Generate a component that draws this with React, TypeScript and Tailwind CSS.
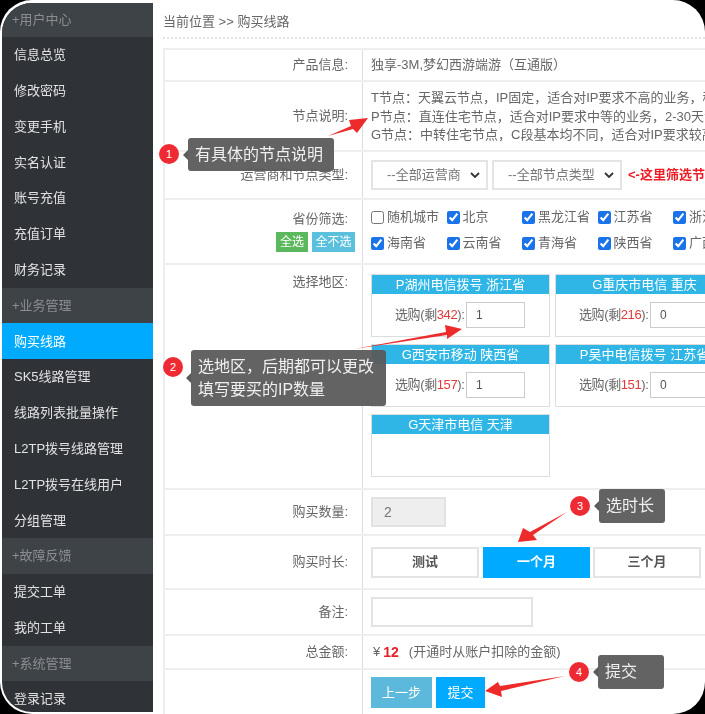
import type { ReactNode } from 'react'

const FONT = '[font-family:"Liberation_Sans","Noto_Sans_CJK_SC",sans-serif]'

const menu = [
  { label: '+用户中心', kind: 'group' },
  { label: '信息总览' },
  { label: '修改密码' },
  { label: '变更手机' },
  { label: '实名认证' },
  { label: '账号充值' },
  { label: '充值订单' },
  { label: '财务记录' },
  { label: '+业务管理', kind: 'group' },
  { label: '购买线路', kind: 'active' },
  { label: 'SK5线路管理' },
  { label: '线路列表批量操作' },
  { label: 'L2TP拨号线路管理' },
  { label: 'L2TP拨号在线用户' },
  { label: '分组管理' },
  { label: '+故障反馈', kind: 'group' },
  { label: '提交工单' },
  { label: '我的工单' },
  { label: '+系统管理', kind: 'group' },
  { label: '登录记录' },
]

const provinces = [
  { name: '随机城市', checked: false },
  { name: '北京', checked: true },
  { name: '黑龙江省', checked: true },
  { name: '江苏省', checked: true },
  { name: '浙江省', checked: true },
  { name: '海南省', checked: true },
  { name: '云南省', checked: true },
  { name: '青海省', checked: true },
  { name: '陕西省', checked: true },
  { name: '广西省', checked: true },
]

const regions = [
  { title: 'P湖州电信拨号 浙江省', left: 342, value: 1 },
  { title: 'G重庆市电信 重庆', left: 216, value: 0 },
  { title: 'G西安市移动 陕西省', left: 157, value: 1 },
  { title: 'P吴中电信拨号 江苏省', left: 151, value: 0 },
  { title: 'G天津市电信 天津' },
]

function Sidebar() {
  return (
    <aside className="w-[151px] h-full shrink-0 bg-[#2f3338] overflow-hidden rounded-l-[30px]">
      {menu.map((item, index) => {
        if (item.kind === 'group') {
          return (
            <div
              key={item.label}
              className={`${index === 0 ? 'h-[34px]' : 'h-[35.8px]'} flex items-center pl-[10px] bg-[#3e4347] text-[13px] text-[#8b8e91]`}
            >
              {item.label}
            </div>
          )
        }
        if (item.kind === 'active') {
          return (
            <div key={item.label} className="h-[35.8px] flex items-center pl-[12px] bg-[#00aaff] text-[13px] text-white">
              {item.label}
            </div>
          )
        }
        return (
          <div key={item.label} className="h-[35.8px] flex items-center pl-[12px] text-[13px] text-[#e2e2e2]">
            {item.label}
          </div>
        )
      })}
    </aside>
  )
}

function Row({ label, className, children }: { label?: ReactNode; className: string; children: ReactNode }) {
  return (
    <div className={`flex border-b-2 border-[#eeeeee] ${className}`}>
      <div className="w-[198px] shrink-0 pr-[14px] flex flex-col justify-center items-end border-r border-[#dddddd] text-[13px] text-[#666666]">
        {label}
      </div>
      <div className="flex-1 min-w-0 pl-[8px] text-[13px] text-[#666666]">{children}</div>
    </div>
  )
}

function RegionCard({ title, left, value }: { title: string; left?: number; value?: number }) {
  return (
    <div className="h-[63px] border border-[#dddddd]">
      <div className="h-[19px] bg-[#2fb6e6] text-center text-[13px] leading-[19px] text-white whitespace-nowrap">{title}</div>
      {left !== undefined && (
        <div className="flex items-center h-[41px] pl-[23px] whitespace-nowrap">
          <span className="w-[71px] text-[#666666] text-[13px] tracking-[-0.4px]">
            选购(剩<span className="text-[#e23a3a]">{left}</span>):
          </span>
          <input
            readOnly
            value={value}
            className="w-[59px] h-[26px] border border-[#cccccc] pl-[9px] text-[12px] text-[#555555] outline-none"
          />
        </div>
      )}
    </div>
  )
}

function Select({ text, className }: { text: string; className: string }) {
  return (
    <div className={`h-[30px] flex items-center justify-between border-2 border-[#e4e4e4] pl-[14px] pr-[6px] text-[13px] text-[#777777] ${className}`}>
      <span>{text}</span>
      <svg width="10" height="6" viewBox="0 0 10 6" fill="none" stroke="#333333" strokeWidth="1.8">
        <path d="M1 1l4 4 4-4" />
      </svg>
    </div>
  )
}

function Callout({ number, className, dotClassName, children }: { number: number; className: string; dotClassName: string; children: ReactNode }) {
  return (
    <>
      <div className={`absolute w-[20px] h-[20px] rounded-full bg-[#ee2b33] flex items-center justify-center text-[11px] text-white ${dotClassName}`}>
        {number}
      </div>
      <div className={`absolute rounded-[3px] bg-[#5b5b5b]/95 pl-[7px] text-[16px] leading-[23px] text-[#f0f0f0] whitespace-nowrap ${className}`}>
        <span className="absolute left-[-5px] top-1/2 -translate-y-1/2 border-y-[5px] border-y-transparent border-r-[5px] border-r-[#5b5b5b]" />
        {children}
      </div>
    </>
  )
}

export default function App() {
  return (
    <div className={`relative w-[705px] h-[714px] bg-black overflow-hidden ${FONT}`}>
      <div className="h-full blur-[0.4px]">
        <div className="flex h-full bg-white rounded-[32px] overflow-hidden pt-[3px] pl-[2px] pb-[2px]">
          <Sidebar />
          <main className="flex-1 min-w-0 pl-[10px]">
            <div className="h-[36px] pt-[3px] flex items-center border-b-2 border-dotted border-[#e2e2e2] text-[13px] text-[#666666] whitespace-nowrap">
              当前位置 &gt;&gt; 购买线路
            </div>
            <div className="mt-[9px] w-[640px] border-t-2 border-l-2 border-[#eeeeee]">
              <Row label="产品信息:" className="h-[32px]">
                <div className="h-full flex items-center">独享-3M,梦幻西游端游（互通版）</div>
              </Row>
              <Row label="节点说明:" className="h-[70px]">
                <div className="pt-[7px] leading-[18.5px] whitespace-nowrap">
                  <p>T节点：天翼云节点，IP固定，适合对IP要求不高的业务，稳定性高</p>
                  <p>P节点：直连住宅节点，适合对IP要求中等的业务，2-30天会更换</p>
                  <p>G节点：中转住宅节点，C段基本均不同，适合对IP要求较高业务</p>
                </div>
              </Row>
              <Row label="运营商和节点类型:" className="h-[48px]">
                <div className="h-full flex items-center gap-[4px] whitespace-nowrap">
                  <Select text="--全部运营商" className="w-[117px]" />
                  <Select text="--全部节点类型" className="w-[130px]" />
                  <span className="ml-[2px] font-bold text-[#ee1c25]">&lt;-这里筛选节点类型</span>
                </div>
              </Row>
              <Row
                label={
                  <>
                    <span className="mt-[-2px]">省份筛选:</span>
                    <div className="flex gap-[4px] mt-[3px] mr-[-7px] text-[12px] text-white">
                      <span className="w-[32px] h-[20px] flex items-center justify-center bg-[#5cb85c]">全选</span>
                      <span className="w-[43px] h-[20px] flex items-center justify-center bg-[#5bc0de]">全不选</span>
                    </div>
                  </>
                }
                className="h-[65px]"
              >
                <div className="grid grid-cols-[75.5px_75.5px_75.5px_75.5px_75.5px] gap-y-[10px] pt-[9px]">
                  {provinces.map((province) => (
                    <label key={province.name} className="flex items-center gap-[3px] h-[16px] whitespace-nowrap">
                      <input type="checkbox" readOnly checked={province.checked} className="w-[13px] h-[13px] m-0 accent-[#1a73e8]" />
                      {province.name}
                    </label>
                  ))}
                </div>
              </Row>
              <Row
                label={<span className="mt-[-190px]">选择地区:</span>}
                className="h-[225px]"
              >
                <div className="grid grid-cols-[179px_179px] gap-x-[5px] gap-y-[7px] pt-[9px]">
                  {regions.map((region) => (
                    <RegionCard key={region.title} {...region} />
                  ))}
                </div>
              </Row>
              <Row label="购买数量:" className="h-[46px]">
                <div className="h-full flex items-center">
                  <div className="w-[75px] h-[30px] flex items-center pl-[11px] bg-[#eeeeee] border-2 border-[#e2e2e2] text-[14px] text-[#777777]">2</div>
                </div>
              </Row>
              <Row label="购买时长:" className="h-[54px]">
                <div className="h-full flex items-center font-bold text-[13px] text-[#555555]">
                  <div className="w-[108px] h-[31px] flex items-center justify-center border-2 border-[#e4e4e4]">测试</div>
                  <div className="ml-[4px] w-[107px] h-[31px] flex items-center justify-center bg-[#00aaff] text-white">一个月</div>
                  <div className="ml-[3px] w-[108px] h-[31px] flex items-center justify-center border-2 border-[#e4e4e4]">三个月</div>
                </div>
              </Row>
              <Row label="备注:" className="h-[46px]">
                <div className="h-full flex items-center">
                  <div className="w-[162px] h-[30px] border-2 border-[#e4e4e4]" />
                </div>
              </Row>
              <Row label="总金额:" className="h-[34px]">
                <div className="h-full flex items-center whitespace-nowrap">
                  <span className="ml-[2px]">¥</span>
                  <span className="ml-[3px] font-bold text-[14px] text-[#e5202a]">12</span>
                  <span className="ml-[10px]">(开通时从账户扣除的金额)</span>
                </div>
              </Row>
              <div className="flex h-[44px]">
                <div className="w-[198px] shrink-0 border-r border-[#dddddd]" />
                <div className="pl-[8px] pt-[7px] flex gap-[4px] text-[13px] text-white">
                  <div className="w-[61px] h-[31px] flex items-center justify-center bg-[#5db9dc]">上一步</div>
                  <div className="w-[49px] h-[31px] flex items-center justify-center bg-[#00aaff]">提交</div>
                </div>
              </div>
            </div>
          </main>
        </div>

        <svg className="absolute inset-0 pointer-events-none" width="705" height="714" viewBox="0 0 705 714">
          <g fill="#ee2b2b">
            <polygon points="328,136 351,126 349,120 368,118 357,133 353,129" />
            <polygon points="354,349 446,332 445,325 462,329 447,339 447,335" />
            <polygon points="567,512 530,532 523,528 518,542 537,540 533,535" />
            <polygon points="565,676 500,686 498,682 485,691 502,697 501,691" />
          </g>
        </svg>

        <Callout number={1} dotClassName="left-[159px] top-[144px]" className="left-[188px] top-[138px] w-[146px] h-[33px] leading-[33px]">
          有具体的节点说明
        </Callout>
        <Callout number={2} dotClassName="left-[163px] top-[357px]" className="left-[191px] top-[350px] w-[195px] h-[56px] pt-[5px]">
          选地区，后期都可以更改
          <br />
          填写要买的IP数量
        </Callout>
        <Callout number={3} dotClassName="left-[570px] top-[496px]" className="left-[599px] top-[489px] w-[66px] h-[34px] leading-[34px]">
          选时长
        </Callout>
        <Callout number={4} dotClassName="left-[569px] top-[662px]" className="left-[598px] top-[655px] w-[66px] h-[34px] leading-[34px]">
          提交
        </Callout>
      </div>
    </div>
  )
}
